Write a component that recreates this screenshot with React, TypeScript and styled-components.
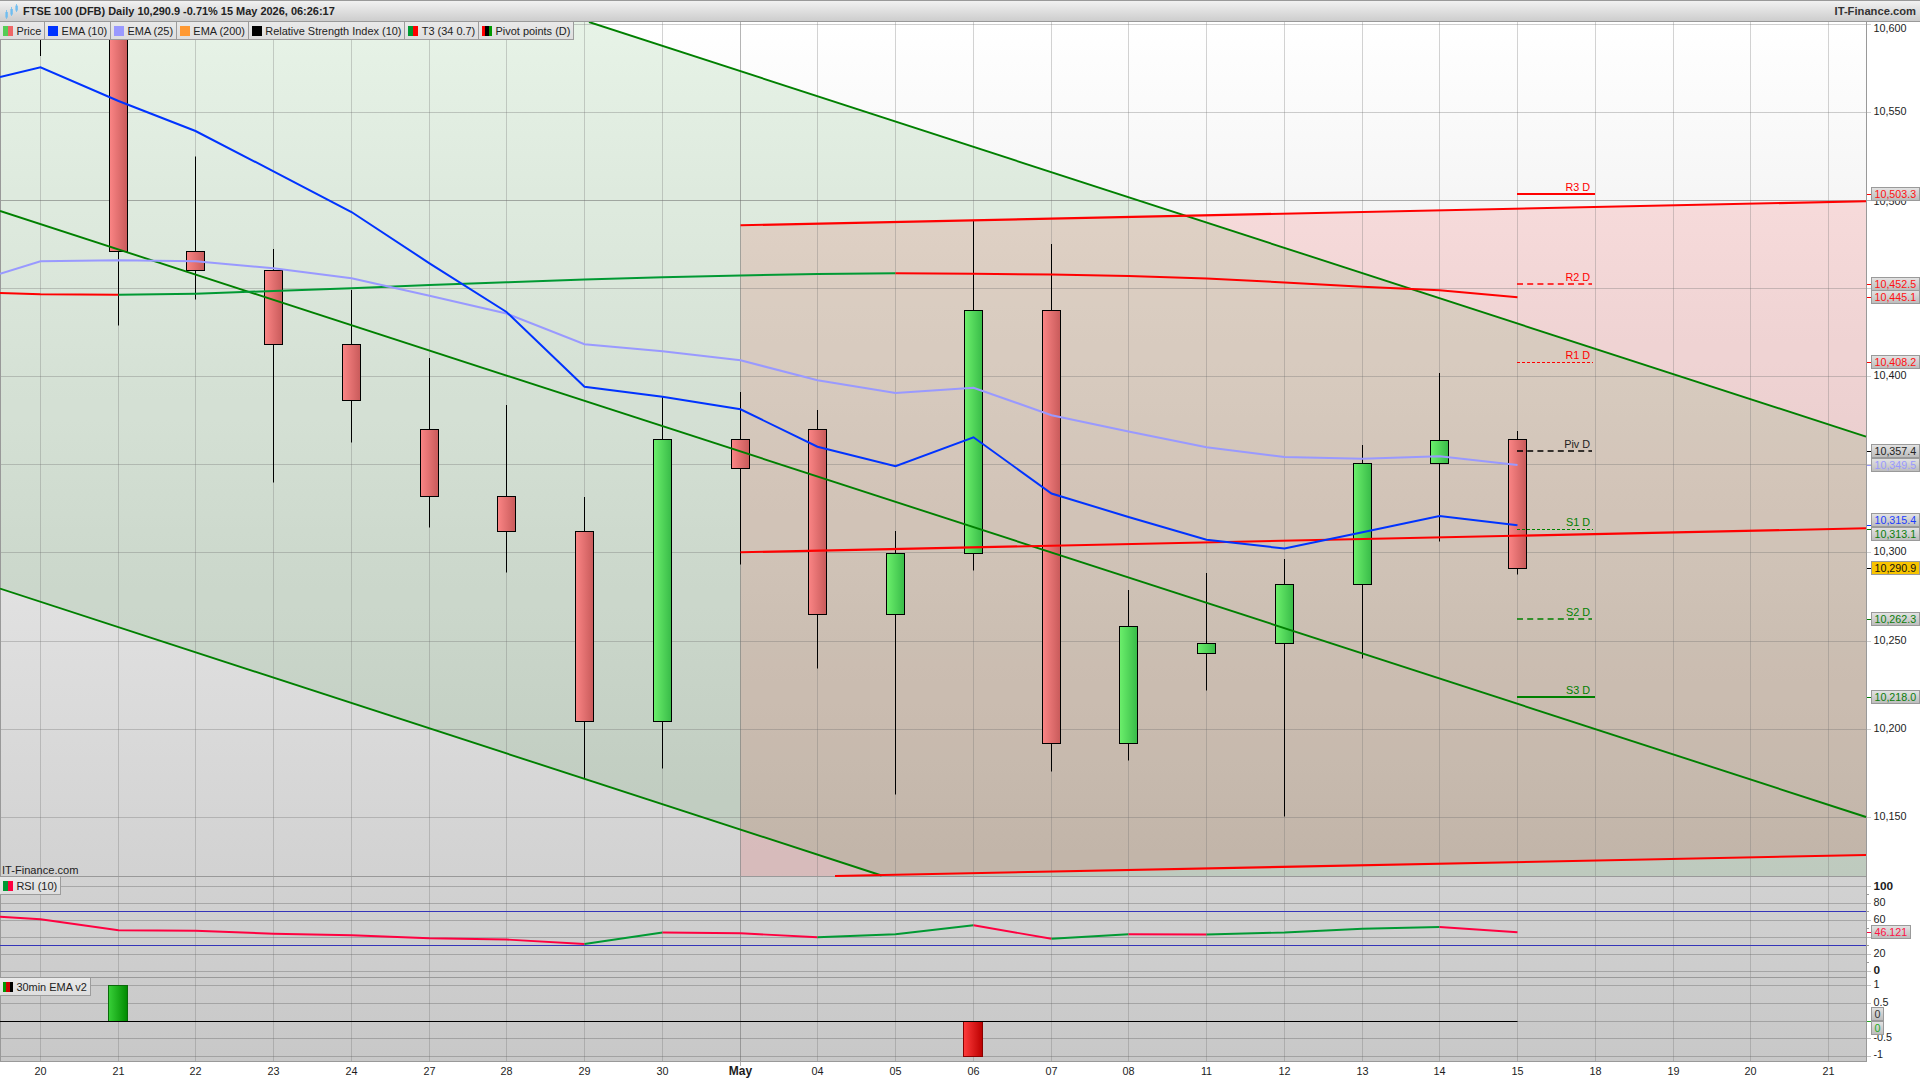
import React from "react";
import styled, { createGlobalStyle } from "styled-components";

const GlobalStyle = createGlobalStyle`
  html, body { margin: 0; padding: 0; background: #fff; }
  #root { width: 1920px; height: 1080px; }
`;

const FONT = `"Liberation Sans", Arial, sans-serif`;

const Page = styled.div`
  width: 1920px;
  height: 1080px;
  display: flex;
  flex-direction: column;
  overflow: hidden;
  font-family: ${FONT};
  color: #1c1c1c;
`;

const TitleBar = styled.header`
  height: 22px;
  box-sizing: border-box;
  flex: none;
  display: flex;
  align-items: center;
  justify-content: space-between;
  padding: 0 4px 0 5px;
  border-top: 1px solid #999;
  border-bottom: 1px solid #999;
  background: linear-gradient(#f1f1f1, #cdcdcd);
`;

const TitleGroup = styled.div`
  display: flex;
  align-items: center;
  gap: 5px;
`;

const TitleText = styled.span`
  font-size: 10.96px;
  font-weight: 700;
  color: #222;
`;

const Brand = styled.span`
  font-size: 11.2px;
  font-weight: 700;
  color: #333;
`;

const Stage = styled.main`
  position: relative;
  flex: 1;
  background: #fff;
`;

const ChartSvg = styled.svg`
  display: block;
  width: 1920px;
  height: 1058px;
  font-family: ${FONT};
`;

const Legend = styled.div<{ $top: number }>`
  position: absolute;
  top: ${(p) => p.$top}px;
  left: 0;
  display: flex;
  height: 18px;
  box-sizing: border-box;
  border-bottom: 1px solid #9c9c9c;
`;

const LegendItem = styled.div`
  display: flex;
  align-items: center;
  gap: 3.5px;
  padding: 0 2.9px 0 2.9px;
  font-size: 10.95px;
  color: #222;
  white-space: nowrap;
  background: linear-gradient(#e9e9e9, #dedede);
  border-right: 1px solid #9c9c9c;
`;

const Swatch = styled.i<{ $stops: string[] }>`
  display: block;
  width: 10px;
  height: 10px;
  margin-top: 1px;
  background: ${(p) =>
    `linear-gradient(90deg, ${p.$stops
      .map((c, i) => `${c} ${(i * 100) / p.$stops.length}% ${((i + 1) * 100) / p.$stops.length}%`)
      .join(", ")})`};
`;

const Watermark = styled.span`
  position: absolute;
  left: 2px;
  top: 842px;
  font-size: 11.1px;
  color: #222;
`;

const Tag = styled.div<{ $color: string; $fill?: boolean }>`
  position: absolute;
  left: 1871px;
  height: 14px;
  min-width: 8px;
  box-sizing: border-box;
  padding: 0 2.5px;
  display: flex;
  align-items: center;
  font-size: 10.7px;
  color: ${(p) => p.$color};
  border: 1px solid #9a9a9a;
  background: ${(p) => (p.$fill ? "#f8c400" : "linear-gradient(#e2e2e2, #bdbdbd)")};
`;

/* ---------- chart data (page pixels) ---------- */

const gridX = [40.5, 118.5, 195.5, 273.5, 351.5, 429.5, 506.5, 584.5, 662.5, 740.5, 817.5, 895.5, 973.5, 1051.5, 1128.5, 1206.5, 1284.5, 1362.5, 1439.5, 1517.5, 1595.5, 1673.5, 1750.5, 1828.5];
const dates = ["20", "21", "22", "23", "24", "27", "28", "29", "30", "May", "04", "05", "06", "07", "08", "11", "12", "13", "14", "15", "18", "19", "20", "21"];

const priceGrid = [24.5, 112.5, 200.5, 288.5, 376.5, 464.5, 552.5, 641.5, 729.5, 817.5];
const paneGrid = [886.5, 903.5, 920.5, 937.5, 954.5, 971.5, 985.5, 1003.5, 1021.5, 1038.5, 1056.5];
const minorTicks = [894.5, 911.5, 928.5, 945.5, 962.5];

const axisLabels: { t: string; y: number; bold?: boolean }[] = [
  { t: "10,600", y: 28 }, { t: "10,550", y: 111 }, { t: "10,500", y: 201 },
  { t: "10,400", y: 375 }, { t: "10,300", y: 551 }, { t: "10,250", y: 640 },
  { t: "10,200", y: 728 }, { t: "10,150", y: 816 },
  { t: "100", y: 885.5, bold: true }, { t: "80", y: 902 }, { t: "60", y: 919 },
  { t: "20", y: 953 }, { t: "0", y: 970, bold: true },
  { t: "1", y: 984 }, { t: "0.5", y: 1002 }, { t: "-0.5", y: 1037 }, { t: "-1", y: 1054 },
];

type Candle = [number, number, number, number, number, "up" | "down"];
const candles: Candle[] = [
  [118.5, 22, 22, 251.5, 325.5, "down"],
  [195.5, 156.5, 251.5, 270.5, 299.5, "down"],
  [273.5, 249, 270.5, 344.5, 482.5, "down"],
  [351.5, 290, 344.5, 400.5, 442.5, "down"],
  [429.5, 358, 429.5, 496.5, 527.5, "down"],
  [506.5, 405, 496.5, 531.5, 572.5, "down"],
  [584.5, 497, 531.5, 721.5, 778.5, "down"],
  [662.5, 396, 439.5, 721.5, 768.5, "up"],
  [740.5, 392, 439.5, 468.5, 564.5, "down"],
  [817.5, 410, 429.5, 614.5, 668.5, "down"],
  [895.5, 531, 553.5, 614.5, 794.5, "up"],
  [973.5, 220, 310.5, 553.5, 570.5, "up"],
  [1051.5, 244, 310.5, 743.5, 771.5, "down"],
  [1128.5, 590, 626.5, 743.5, 760.5, "up"],
  [1206.5, 573, 643.5, 653.5, 690.5, "up"],
  [1284.5, 559, 584.5, 643.5, 816.5, "up"],
  [1362.5, 445, 463.5, 584.5, 658.5, "up"],
  [1439.5, 373, 440.5, 463.5, 541.5, "up"],
  [1517.5, 431, 439.5, 568.5, 574.5, "down"],
];

const xs = [0, ...gridX.slice(0, 20)];
const toPts = (ys: number[], from = 0) => ys.map((y, i) => `${xs[i + from]},${y}`).join(" ");

const ema10 = [77, 67.3, 101, 131, 171.3, 212, 263.3, 312, 386.7, 396.7, 409.3, 446.7, 466.3, 437.3, 493.5, 517, 539.8, 548.5, 532.3, 516, 525.3];
const ema25 = [273.7, 261.3, 260.3, 261.3, 268.3, 278.3, 295.7, 313.5, 344.3, 351.3, 360.3, 380.3, 393, 387.7, 415.2, 431.4, 447.2, 457, 458.7, 456.3, 465];
const t3 = [293, 294.3, 294.7, 293.7, 291, 288.3, 285, 282.3, 279.5, 277.2, 275.5, 274, 273.3, 273.8, 274.5, 276, 278.4, 282.4, 286.7, 290.3, 297.3];
const rsi = [916.7, 919.3, 930.3, 930.7, 933.7, 935.3, 938.3, 939.5, 944, 932.5, 933.3, 937.3, 934.3, 925.3, 938.7, 934.3, 934.5, 932.5, 928.7, 927, 932.3];

const RED = "#ff0000";
const GREEN = "#008000";
const CRIMSON = "#ff0040";
const T3GREEN = "#009933";

const t3Segments: [number, number, string][] = [[0, 2, RED], [2, 12, T3GREEN], [12, 20, RED]];
const rsiSegments: [number, number, string][] = [
  [0, 8, CRIMSON], [8, 9, T3GREEN], [9, 11, CRIMSON], [11, 13, T3GREEN], [13, 14, CRIMSON],
  [14, 15, T3GREEN], [15, 16, CRIMSON], [16, 19, T3GREEN], [19, 20, CRIMSON],
];

const channel: [number, number, number, number][] = [
  [589, 22, 1866, 436.7],
  [0, 211, 1866, 817],
  [0, 588.6, 881.5, 875.5],
];
const reds: [number, number, number, number][] = [
  [740.5, 225.3, 1866, 201.2],
  [740.5, 552.3, 1866, 528.3],
  [835, 876, 1866, 855],
];

const pivots: { label: string; y: number; c: string; w: number; dash?: string; end: number; ly: number }[] = [
  { label: "R3 D", y: 194, c: RED, w: 2, end: 1595, ly: 187 },
  { label: "R2 D", y: 284, c: RED, w: 1.6, dash: "6 4.2", end: 1592, ly: 277 },
  { label: "R1 D", y: 362.5, c: RED, w: 1, dash: "3 2", end: 1593, ly: 355 },
  { label: "Piv D", y: 451, c: "#000", w: 1.6, dash: "6 4.2", end: 1592, ly: 444 },
  { label: "S1 D", y: 529.5, c: GREEN, w: 1, dash: "3 2", end: 1593, ly: 522 },
  { label: "S2 D", y: 619, c: GREEN, w: 1.6, dash: "6 4.2", end: 1592, ly: 612 },
  { label: "S3 D", y: 697, c: GREEN, w: 2, end: 1595, ly: 690 },
];

const tags: { t: string; y: number; c: string; fill?: boolean }[] = [
  { t: "10,503.3", y: 194.3, c: "#ff1111" },
  { t: "10,452.5", y: 284.3, c: "#ff1111" },
  { t: "10,445.1", y: 297.3, c: "#ff1111" },
  { t: "10,408.2", y: 362.3, c: "#ff1111" },
  { t: "10,357.4", y: 451, c: "#222" },
  { t: "10,349.5", y: 465, c: "#9999ff" },
  { t: "10,315.4", y: 520, c: "#1a3cff" },
  { t: "10,313.1", y: 534, c: "#0a7d0a" },
  { t: "10,290.9", y: 568.3, c: "#111", fill: true },
  { t: "10,262.3", y: 619, c: "#0a7d0a" },
  { t: "10,218.0", y: 697, c: "#0a7d0a" },
  { t: "46.121", y: 932, c: "#ff1144" },
  { t: "0", y: 1014, c: "#333" },
  { t: "0", y: 1028, c: "#22aa22" },
];

const tagTicks: [number, string][] = [
  [194.5, RED], [284.5, RED], [297.5, RED], [362.5, RED], [451.5, "#000"], [465.5, "#9999ff"],
  [525.5, "#0033ff"], [529.5, GREEN], [568.5, "#000"], [619.5, GREEN], [697.5, GREEN], [932.5, CRIMSON], [1021.5, "#22aa22"],
];

const LogoIcon = () => (
  <svg width="13" height="15" viewBox="0 0 13 15" fill="#6fbdf0" stroke="#6fbdf0">
    <path d="M1.5 6v9M6.5 3v9M11.5 0v8" strokeWidth="0.8" fill="none" />
    <rect x="0.4" y="8" width="2.4" height="5.6" stroke="none" />
    <rect x="5.4" y="5" width="2.4" height="5.6" stroke="none" />
    <rect x="10.4" y="1.6" width="2.4" height="5" stroke="none" />
  </svg>
);

const legendItems: { label: string; stops: string[] }[] = [
  { label: "Price", stops: ["#55cc55", "#ee6666"] },
  { label: "EMA (10)", stops: ["#0033ff"] },
  { label: "EMA (25)", stops: ["#9999ff"] },
  { label: "EMA (200)", stops: ["#ff9933"] },
  { label: "Relative Strength Index (10)", stops: ["#000"] },
  { label: "T3 (34 0.7)", stops: ["#009933", "#ff0000"] },
  { label: "Pivot points (D)", stops: ["#ff0000", "#000", "#009900"] },
];

export default function App() {
  return (
    <Page>
      <GlobalStyle />
      <TitleBar>
        <TitleGroup>
          <LogoIcon />
          <TitleText>FTSE 100 (DFB) Daily 10,290.9 -0.71% 15 May 2026, 06:26:17</TitleText>
        </TitleGroup>
        <Brand>IT-Finance.com</Brand>
      </TitleBar>
      <Stage>
        <ChartSvg viewBox="0 22 1920 1058">
          <defs>
            <linearGradient id="bg" x1="0" y1="0" x2="0" y2="1">
              <stop offset="0" stopColor="#ffffff" />
              <stop offset="1" stopColor="#c8c8c8" />
            </linearGradient>
            <linearGradient id="down" x1="0" y1="0" x2="1" y2="0">
              <stop offset="0" stopColor="#fb8585" />
              <stop offset="1" stopColor="#c85a5a" />
            </linearGradient>
            <linearGradient id="up" x1="0" y1="0" x2="1" y2="0">
              <stop offset="0" stopColor="#6cf06c" />
              <stop offset="1" stopColor="#38bb48" />
            </linearGradient>
            <linearGradient id="barUp" x1="0" y1="0" x2="1" y2="0">
              <stop offset="0" stopColor="#38d038" />
              <stop offset="1" stopColor="#008a00" />
            </linearGradient>
            <linearGradient id="barDown" x1="0" y1="0" x2="1" y2="0">
              <stop offset="0" stopColor="#ff3c3c" />
              <stop offset="1" stopColor="#bb0000" />
            </linearGradient>
          </defs>

          {/* plot background and clouds */}
          <rect x="0" y="22" width="1866" height="1039" fill="url(#bg)" />
          <polygon points="740.5,225.3 1866,201.2 1866,855 835,876 740.5,876" fill="rgba(255,0,0,0.11)" />
          <polygon points="0,22 589,22 1866,436.7 1866,876 881.5,876 0,588.6" fill="rgba(0,128,0,0.095)" />

          {/* grid */}
          {gridX.map((x, i) => (
            <line key={i} x1={x} x2={x} y1={22} y2={i === 9 ? 1066 : 1061} stroke={i === 9 ? "rgba(90,90,90,0.45)" : "rgba(110,110,110,0.3)"} />
          ))}
          {priceGrid.map((y) => (
            <line key={y} x1={0} x2={1871} y1={y} y2={y} stroke={y === 200.5 ? "rgba(110,110,110,0.55)" : "rgba(110,110,110,0.33)"} />
          ))}
          {paneGrid.map((y) => (
            <line key={y} x1={0} x2={1871} y1={y} y2={y} stroke="rgba(100,100,100,0.38)" />
          ))}
          {minorTicks.map((y) => (
            <line key={y} x1={1866} x2={1869} y1={y} y2={y} stroke="#999" />
          ))}
          <line x1={0} x2={1866} y1={876.5} y2={876.5} stroke="#999" />
          <line x1={0} x2={1866} y1={977.5} y2={977.5} stroke="#999" />
          <line x1={0} x2={1866} y1={1061.5} y2={1061.5} stroke="#999" />
          <line x1={1866.5} x2={1866.5} y1={22} y2={1062} stroke="#999" />
          <line x1={0.5} x2={0.5} y1={22} y2={1061} stroke="#999" />

          {/* RSI bands */}
          <line x1={0} x2={1866} y1={911.5} y2={911.5} stroke="#3535b8" />
          <line x1={0} x2={1866} y1={945.5} y2={945.5} stroke="#3535b8" />

          {/* candles */}
          <line x1={40.5} x2={40.5} y1={22} y2={56} stroke="#000" />
          {candles.map(([x, wt, bt, bb, wb, dir]) => (
            <g key={x}>
              <line x1={x} x2={x} y1={wt} y2={wb} stroke="#000" />
              <rect x={x - 9} y={bt} width={18} height={bb - bt} fill={`url(#${dir})`} stroke="#000" />
            </g>
          ))}

          {/* channel and trend lines */}
          {channel.map(([a, b, c, d], i) => (
            <line key={i} x1={a} y1={b} x2={c} y2={d} stroke={GREEN} strokeWidth={1.9} />
          ))}
          {reds.map(([a, b, c, d], i) => (
            <line key={i} x1={a} y1={b} x2={c} y2={d} stroke={RED} strokeWidth={2.1} />
          ))}

          {/* moving averages */}
          {t3Segments.map(([a, b, c]) => (
            <polyline key={a} points={toPts(t3.slice(a, b + 1), a)} fill="none" stroke={c} strokeWidth={2} />
          ))}
          <polyline points={toPts(ema25)} fill="none" stroke="#9999ff" strokeWidth={2} />
          <polyline points={toPts(ema10)} fill="none" stroke="#0033ff" strokeWidth={2} />

          {/* RSI */}
          {rsiSegments.map(([a, b, c]) => (
            <polyline key={a} points={toPts(rsi.slice(a, b + 1), a)} fill="none" stroke={c} strokeWidth={1.9} />
          ))}

          {/* 30min EMA pane */}
          <rect x={108.5} y={985.5} width={19} height={36} fill="url(#barUp)" stroke="#0a6a0a" />
          <rect x={963.5} y={1021.5} width={19} height={35} fill="url(#barDown)" stroke="#8a0000" />
          <line x1={0} x2={1517.5} y1={1021.5} y2={1021.5} stroke="#000" />

          {/* pivot levels */}
          {pivots.map((p) => (
            <g key={p.label}>
              <line x1={1517} x2={p.end} y1={p.y} y2={p.y} stroke={p.c} strokeWidth={p.w} strokeDasharray={p.dash} />
              <text x={1590} y={p.ly + 4} textAnchor="end" fontSize={10.8} fill={p.c === "#000" ? "#222" : p.c}>{p.label}</text>
            </g>
          ))}

          {/* value axis */}
          {axisLabels.map((a) => (
            <text key={a.t + a.y} x={1873.5} y={a.y + 4} fontSize={a.bold ? 11.8 : 10.8} fontWeight={a.bold ? 700 : 400} fill="#1c1c1c">{a.t}</text>
          ))}
          {tagTicks.map(([y, c]) => (
            <line key={y} x1={1867} x2={1871} y1={y} y2={y} stroke={c} />
          ))}

          {/* date axis */}
          {gridX.map((x, i) => (
            <text key={i} x={x} y={1075} textAnchor="middle" fontSize={dates[i] === "May" ? 12 : 10.8} fontWeight={dates[i] === "May" ? 700 : 400} fill="#1c1c1c">{dates[i]}</text>
          ))}
        </ChartSvg>

        <Legend $top={0}>
          {legendItems.map((l) => (
            <LegendItem key={l.label}>
              <Swatch $stops={l.stops} />
              {l.label}
            </LegendItem>
          ))}
        </Legend>
        <Watermark>IT-Finance.com</Watermark>
        <Legend $top={855}>
          <LegendItem>
            <Swatch $stops={["#009933", "#ff0040"]} />
            RSI (10)
          </LegendItem>
        </Legend>
        <Legend $top={956}>
          <LegendItem>
            <Swatch $stops={["#009900", "#cc0000", "#000"]} />
            30min EMA v2
          </LegendItem>
        </Legend>
        {tags.map((t) => (
          <Tag key={t.t + t.y} $color={t.c} $fill={t.fill} style={{ top: t.y - 22 - 7 }}>
            {t.t}
          </Tag>
        ))}
      </Stage>
    </Page>
  );
}
